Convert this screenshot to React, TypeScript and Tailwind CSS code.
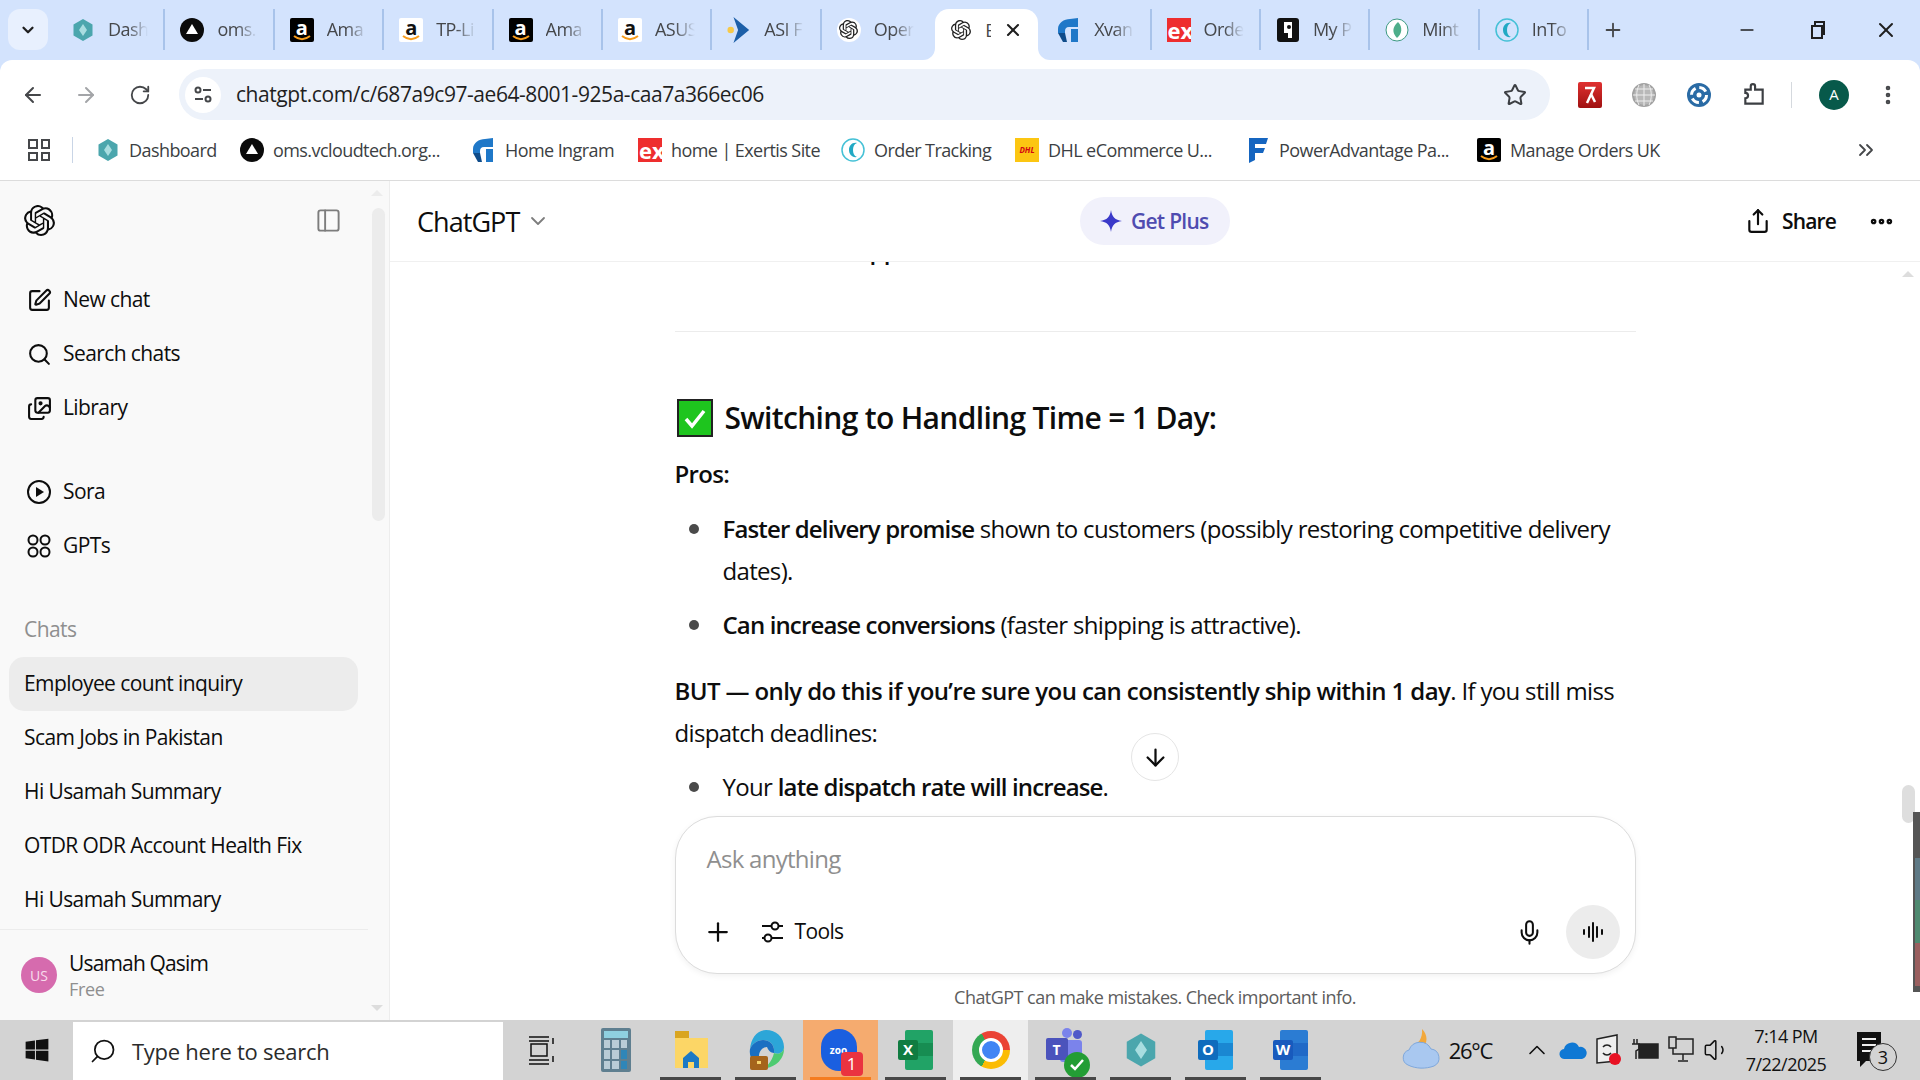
import {
  ArrowDown,
  ArrowLeft,
  ArrowRight,
  ChevronDown,
  ChevronUp,
  ChevronsRight,
  Ellipsis,
  EllipsisVertical,
  Images,
  Mic,
  Minus,
  PanelLeft,
  Plus,
  RotateCw,
  Search,
  Share,
  SquarePen,
  Star,
  Volume1,
  X,
} from "lucide-react";
import { FaWindows } from "react-icons/fa";
import { SiOpenai } from "react-icons/si";

function HexIcon({ size = 24 }: { size?: number }) {
  return (
    <svg width={size} height={size} viewBox="0 0 24 24">
      <path d="M12 1l9.5 5.5v11L12 23l-9.5-5.5v-11z" fill="#4ba6ad" />
      <path d="M12 6l4 6-4 6-4-6z" fill="#a8dde0" />
    </svg>
  );
}

function OmsIcon() {
  return (
    <svg width="24" height="24" viewBox="0 0 24 24">
      <circle cx="12" cy="12" r="12" fill="#0b0b0b" />
      <path d="M12 6l6 10H6z" fill="#fff" />
    </svg>
  );
}

function AmazonIcon({ dark = true }: { dark?: boolean }) {
  return (
    <div
      className={`relative flex h-6 w-6 items-start justify-center overflow-hidden rounded-[2px] text-[20px] leading-[20px] font-bold ${
        dark ? "bg-black text-white" : "bg-white text-[#111111]"
      }`}
    >
      a
      <svg className="absolute bottom-[1px] left-[3px]" width="18" height="6" viewBox="0 0 18 6">
        <path d="M1 1c5 4 11 4 16 0" stroke="#f79c1c" strokeWidth="2" fill="none" />
      </svg>
    </div>
  );
}

function AsiIcon() {
  return (
    <svg width="26" height="28" viewBox="0 0 26 28">
      <circle cx="4" cy="14" r="3.5" fill="#f7c948" />
      <path d="M7 0l17 14L7 28l5-14z" fill="#1c5fa8" />
    </svg>
  );
}

function IngramIcon() {
  return (
    <svg width="24" height="26" viewBox="0 0 24 26">
      <path d="M21 1v9H12c-3 0-4 2-4 4v2H1v-4C1 6 7 2 13 2z" fill="#1f78c8" />
      <path d="M14 12h7v13h-7z" fill="#1f78c8" />
      <path d="M1 16h7l2 9H6z" fill="#0f4c8a" />
    </svg>
  );
}

function ExertisIcon() {
  return (
    <div className="flex h-6 w-6 items-center justify-start overflow-hidden bg-[#ee2e2e] pl-[1px] text-[22px] leading-[22px] font-bold text-white">
      ex
    </div>
  );
}

function SwirlIcon() {
  return (
    <svg width="24" height="24" viewBox="0 0 24 24" fill="none">
      <circle cx="12" cy="12" r="11" stroke="#45c1d6" strokeWidth="1.5" />
      <path d="M16 5c-5-1-8 3-8 7s3 8 8 7c-3-1-4-4-4-7s1-6 4-7z" fill="#22a9c4" />
    </svg>
  );
}

function MintIcon() {
  return (
    <svg width="24" height="24" viewBox="0 0 24 24" fill="none">
      <circle cx="12" cy="12" r="11" fill="#fff" stroke="#3d9a83" strokeWidth="1" />
      <path d="M13 4c5 5 4 12-1 16-5-5-5-11 1-16z" fill="#4dae8a" />
    </svg>
  );
}

function PassIcon() {
  return (
    <svg width="24" height="24" viewBox="0 0 24 24">
      <rect x="1" width="22" height="24" rx="3" fill="#111" />
      <path d="M8 4h8v16h-4v-5H8z" fill="#fff" />
      <circle cx="13" cy="9" r="2" fill="#111" />
    </svg>
  );
}

function DhlIcon() {
  return (
    <div className="flex h-6 w-6 items-center justify-center bg-[#fcc612] text-[8px] font-bold text-[#d40511] italic">
      DHL
    </div>
  );
}

function PowerIcon() {
  return (
    <svg width="20" height="26" viewBox="0 0 20 26">
      <path d="M1 1h19l-2 6H7v4h10l-2 5H7v7l-6 3z" fill="#1565c0" />
    </svg>
  );
}

function OpenAiTab() {
  return (
    <div className="flex h-6 w-6 items-center justify-center rounded-full bg-white text-[#222222]">
      <SiOpenai size={19} />
    </div>
  );
}

const tabs = [
  { icon: <HexIcon />, label: "Dash" },
  { icon: <OmsIcon />, label: "oms." },
  { icon: <AmazonIcon />, label: "Ama" },
  { icon: <AmazonIcon dark={false} />, label: "TP-Li" },
  { icon: <AmazonIcon />, label: "Ama" },
  { icon: <AmazonIcon dark={false} />, label: "ASUS" },
  { icon: <AsiIcon />, label: "ASI F" },
  { icon: <OpenAiTab />, label: "Oper", last: true },
];

const tabsAfter = [
  { icon: <IngramIcon />, label: "Xvan" },
  { icon: <ExertisIcon />, label: "Orde" },
  { icon: <PassIcon />, label: "My P" },
  { icon: <MintIcon />, label: "Mint" },
  { icon: <SwirlIcon />, label: "InTo" },
];

const bookmarks = [
  { icon: <HexIcon />, label: "Dashboard", w: "w-[144px]" },
  { icon: <OmsIcon />, label: "oms.vcloudtech.org...", w: "w-[232px]" },
  { icon: <IngramIcon />, label: "Home Ingram", w: "w-[166px]" },
  { icon: <ExertisIcon />, label: "home | Exertis Site", w: "w-[203px]" },
  { icon: <SwirlIcon />, label: "Order Tracking", w: "w-[174px]" },
  { icon: <DhlIcon />, label: "DHL eCommerce U...", w: "w-[231px]" },
  { icon: <PowerIcon />, label: "PowerAdvantage Pa...", w: "w-[231px]" },
  { icon: <AmazonIcon />, label: "Manage Orders UK", w: "w-[220px]" },
];

function Tab({ icon, label, last }: { icon: React.ReactNode; label: string; last?: boolean }) {
  return (
    <div className={`flex h-[41px] w-[109.4px] items-center pl-[15px] ${last ? "" : "border-r-2 border-[#a8c3ea]"}`}>
      <div className="flex w-6 shrink-0 justify-center">{icon}</div>
      <span className="ml-[13px] w-[40px] overflow-hidden text-[18px] tracking-[-0.03em] whitespace-nowrap text-[#45474a] [mask-image:linear-gradient(to_right,black_50%,transparent)]">
        {label}
      </span>
    </div>
  );
}

function BrowserChrome() {
  return (
    <div className="bg-[#d3e3fd]">
      {/* Tab strip */}
      <div className="flex h-[60px] items-end pl-2">
        <div className="mb-[10px] flex h-[41px] w-[40px] items-center justify-center rounded-xl bg-[#e8f0fe]">
          <ChevronDown size={18} strokeWidth={3} className="text-[#1f1f1f]" />
        </div>
        <div className="ml-2 flex items-center pb-[10px]">
          {tabs.map((t, i) => (
            <Tab key={i} icon={t.icon} label={t.label} last={t.last} />
          ))}
        </div>
        <div className="relative ml-[4px] flex h-[51px] w-[103px] items-center rounded-t-[14px] bg-white pb-[9px] pl-[14px]">
          <div className="flex w-6 justify-center text-[#222222]">
            <SiOpenai size={20} />
          </div>
          <span className="ml-3 w-[6px] overflow-hidden text-[18px] text-[#45474a]">E</span>
          <X size={20} strokeWidth={2.5} className="ml-[12px] text-[#1f1f1f]" />
          {/* concave feet of the active tab */}
          <div className="absolute right-full bottom-0 h-3 w-3 bg-white">
            <div className="h-full w-full rounded-br-[12px] bg-[#d3e3fd]" />
          </div>
          <div className="absolute bottom-0 left-full h-3 w-3 bg-white">
            <div className="h-full w-full rounded-bl-[12px] bg-[#d3e3fd]" />
          </div>
        </div>
        <div className="ml-[4px] flex items-center pb-[10px]">
          {tabsAfter.map((t, i) => (
            <Tab key={i} icon={t.icon} label={t.label} />
          ))}
        </div>
        <div className="mb-[10px] flex h-[41px] items-center pl-[13px]">
          <Plus size={22} strokeWidth={2} className="text-[#45474a]" />
        </div>
        <div className="mb-[10px] ml-auto flex h-[41px] items-center text-[#1f1f1f]">
          <Minus size={20} strokeWidth={2} className="mr-[52px]" />
          <svg width="18" height="20" viewBox="0 0 18 20" fill="none" stroke="#1f1f1f" strokeWidth="2" className="mr-[47px]">
            <rect x="3" y="6" width="10" height="12" />
            <path d="M6 6V2h9v12h-2" />
          </svg>
          <X size={24} strokeWidth={2} className="mr-[22px]" />
        </div>
      </div>

      {/* Toolbar */}
      <div className="flex h-[60px] items-center rounded-t-[12px] bg-white pt-[9px]">
        <ArrowLeft size={24} strokeWidth={2} className="ml-[21px] text-[#45474a]" />
        <ArrowRight size={24} strokeWidth={2} className="ml-[29px] text-[#a3a5a8]" />
        <RotateCw size={22} strokeWidth={2} className="ml-[31px] text-[#45474a]" />
        <div className="ml-[28px] flex h-[51px] w-[1371px] items-center rounded-full bg-[#edf2fa]">
          <div className="ml-[6px] flex h-[36px] w-[36px] items-center justify-center rounded-full bg-white">
            <svg width="20" height="20" viewBox="0 0 20 20" fill="none" stroke="#45474a" strokeWidth="2">
              <circle cx="5" cy="5" r="2.5" />
              <path d="M10 5h8M2 14h8" />
              <circle cx="15" cy="14" r="2.5" />
            </svg>
          </div>
          <span className="ml-[15px] text-[21px] tracking-[-0.021em] text-[#1f1f1f]">
            chatgpt.com/c/687a9c97-ae64-8001-925a-caa7a366ec06
          </span>
          <Star size={24} strokeWidth={2} className="mr-[23px] ml-auto text-[#3c3f43]" />
        </div>
        <div className="ml-[28px] flex h-[26px] w-[24px] items-center justify-center rounded-[2px] bg-gradient-to-b from-[#e03030] to-[#a01010]">
          <svg width="16" height="20" viewBox="0 0 16 20" fill="none" stroke="#fff" strokeWidth="2.5">
            <path d="M3 3h9L5 18" />
            <path d="M9 9l4 8" />
          </svg>
        </div>
        <div className="ml-[30px] flex h-6 w-6 items-center justify-center">
          <svg width="24" height="24" viewBox="0 0 24 24" fill="none" stroke="#a2a2a2" strokeWidth="2">
            <circle cx="12" cy="12" r="11" fill="#b8b8b8" />
            <path d="M1 12h22M12 1v22M3 6h18M3 18h18M7 2c-3 6-3 14 0 20M17 2c3 6 3 14 0 20" stroke="#eeeeee" strokeWidth="1" />
          </svg>
        </div>
        <svg width="24" height="24" viewBox="0 0 24 24" className="ml-[31px]">
          <circle cx="12" cy="12" r="12" fill="#2a6ba5" />
          <circle cx="12" cy="12" r="7.5" fill="none" stroke="#fff" strokeWidth="3" strokeDasharray="8 3.8" />
          <circle cx="12" cy="12" r="2.5" fill="#fff" />
        </svg>
        <svg width="26" height="28" viewBox="0 0 24 24" fill="none" stroke="#3c3f43" strokeWidth="2" className="ml-[30px]">
          <path d="M4 7h5V4a2 2 0 0 1 4 0v3h7v13H4v-5a2.5 2.5 0 0 0 0-5z" />
        </svg>
        <div className="ml-[24px] h-[26px] w-[1px] bg-[#d5d9de]" />
        <div className="ml-[27px] flex h-[30px] w-[30px] items-center justify-center rounded-full bg-[#07594a] text-[15px] text-white">
          A
        </div>
        <EllipsisVertical size={24} strokeWidth={2.6} className="ml-[27px] text-[#45474a]" />
      </div>

      {/* Bookmarks bar */}
      <div className="flex h-[61px] items-center border-b border-[#dcdcdc] bg-white">
        <div className="ml-[28px] grid h-[22px] w-[22px] grid-cols-2 gap-[3px]">
          <div className="border-2 border-[#45474a]" />
          <div className="border-2 border-[#45474a]" />
          <div className="border-2 border-[#45474a]" />
          <div className="border-2 border-[#45474a]" />
        </div>
        <div className="ml-[22px] h-[26px] w-[1px] bg-[#c9d5e6]" />
        <div className="ml-[23px] flex">
          {bookmarks.map((b, i) => (
            <div key={i} className={`flex items-center ${b.w}`}>
              <div className="flex w-6 shrink-0 justify-center">{b.icon}</div>
              <span className="ml-[9px] text-[18px] tracking-[-0.032em] whitespace-nowrap text-[#3c3f43]">
                {b.label}
              </span>
            </div>
          ))}
        </div>
        <ChevronsRight size={24} strokeWidth={1.8} className="mr-[42px] ml-auto text-[#45474a]" />
      </div>
    </div>
  );
}

function NavItem({ icon, label }: { icon: React.ReactNode; label: string }) {
  return (
    <div className="flex h-[54px] items-center pl-[25px]">
      <div className="flex w-[28px] justify-center">{icon}</div>
      <span className="ml-[10px] text-[21px] tracking-[-0.028em]">{label}</span>
    </div>
  );
}

function SoraIcon() {
  return (
    <svg width="26" height="26" viewBox="0 0 26 26" fill="none">
      <circle cx="13" cy="13" r="11" stroke="#0d0d0d" strokeWidth="2" />
      <path d="M10 8l8 5-8 5z" fill="#0d0d0d" />
    </svg>
  );
}

function GptsIcon() {
  return (
    <svg width="26" height="26" viewBox="0 0 26 26" fill="none" stroke="#0d0d0d" strokeWidth="2">
      <circle cx="7" cy="7" r="4.5" />
      <circle cx="19" cy="7" r="4.5" />
      <circle cx="7" cy="19" r="4.5" />
      <circle cx="19" cy="19" r="4.5" />
    </svg>
  );
}

function Sidebar() {
  const chats = ["Scam Jobs in Pakistan", "Hi Usamah Summary", "OTDR ODR Account Health Fix", "Hi Usamah Summary"];
  return (
    <aside className="relative flex h-full w-[390px] shrink-0 flex-col border-r border-[#ededed] bg-[#f9f9f9] text-[#0d0d0d]">
      <div className="flex h-[92px] shrink-0 items-center justify-between pr-[47px] pb-[14px] pl-[24px]">
        <SiOpenai size={31} />
        <PanelLeft size={27} strokeWidth={1.7} className="text-[#7d7d7d]" />
      </div>
      <NavItem icon={<SquarePen size={25} strokeWidth={2} />} label="New chat" />
      <NavItem icon={<Search size={25} strokeWidth={2} />} label="Search chats" />
      <NavItem icon={<Images size={25} strokeWidth={2} />} label="Library" />
      <div className="h-[30px] shrink-0" />
      <NavItem icon={<SoraIcon />} label="Sora" />
      <NavItem icon={<GptsIcon />} label="GPTs" />
      <div className="h-[30px] shrink-0" />
      <div className="flex h-[54px] items-center pl-[24px] text-[21px] tracking-[-0.028em] text-[#8f8f8f]">Chats</div>
      <div className="mr-[31px] ml-[9px] flex h-[54px] items-center rounded-[15px] bg-[#ececec] pl-[15px] text-[21px] tracking-[-0.028em]">
        Employee count inquiry
      </div>
      {chats.map((c, i) => (
        <div key={i} className="flex h-[54px] items-center pl-[24px] text-[21px] tracking-[-0.028em] whitespace-nowrap">
          {c}
        </div>
      ))}
      <div className="mt-[2px] mr-[21px] flex flex-1 items-center border-t border-[#ececec] pl-[21px]">
        <div className="flex h-9 w-9 items-center justify-center rounded-full bg-[#d66bae] text-[14px] text-[#f8dcec]">
          US
        </div>
        <div className="ml-[12px] flex flex-col">
          <span className="text-[21px] leading-[27px] tracking-[-0.04em]">Usamah Qasim</span>
          <span className="text-[18px] leading-[24px] tracking-[-0.02em] text-[#8f8f8f]">Free</span>
        </div>
      </div>
      {/* scrollbar */}
      <div className="absolute top-[27px] right-[4px] h-[313px] w-[13px] rounded-full bg-[#ececec]" />
      <div className="absolute top-[9px] right-[6px] h-0 w-0 border-x-[6px] border-b-[6px] border-x-transparent border-b-[#ececec]" />
      <div className="absolute right-[6px] bottom-[9px] h-0 w-0 border-x-[6px] border-t-[6px] border-x-transparent border-t-[#dddddd]" />
    </aside>
  );
}

function Bullet({ children, className }: { children: React.ReactNode; className?: string }) {
  return (
    <li className={`flex ${className ?? ""}`}>
      <span className="mt-[16px] mr-[24px] h-[10px] w-[10px] shrink-0 rounded-full bg-[#4a4a4a]" />
      <span>{children}</span>
    </li>
  );
}

function Message() {
  return (
    <div className="mx-auto w-[961px] text-[24px] leading-[42px] tracking-[-0.028em] text-[#0d0d0d]">
      <div className="-mt-[33px] ml-[195px] font-semibold">pp</div>
      <div className="mt-[60px] h-[1px] bg-[#ececec]" />
      <h3 className="mt-[63px] flex h-[45px] items-center text-[30px] font-semibold">
        <svg width="36" height="38" viewBox="0 0 36 38" className="mr-[12px] ml-[2px]">
          <rect x="1" y="1" width="34" height="36" fill="#1ec51e" stroke="#222" strokeWidth="2" />
          <path d="M9 20l6 7 12-15" stroke="#fff" strokeWidth="3.5" fill="none" />
        </svg>
        Switching to Handling Time = 1 Day:
      </h3>
      <p className="mt-[13px] font-semibold">Pros:</p>
      <ul className="mt-[13px] pl-[14px]">
        <Bullet>
          <span className="font-semibold tracking-[-0.036em]">Faster delivery promise</span> shown to customers
          (possibly restoring competitive delivery dates).
        </Bullet>
        <Bullet className="mt-[12px]">
          <span className="font-semibold tracking-[-0.036em]">Can increase conversions</span> (faster shipping is
          attractive).
        </Bullet>
      </ul>
      <p className="mt-[24px]">
        <span className="font-semibold tracking-[-0.025em]">
          BUT — only do this if you’re sure you can consistently ship within 1 day
        </span>
        . If you still miss dispatch deadlines:
      </p>
      <ul className="mt-[12px] pl-[14px]">
        <Bullet>
          Your <span className="font-semibold tracking-[-0.036em]">late dispatch rate will increase</span>.
        </Bullet>
      </ul>
    </div>
  );
}

function ToolsIcon() {
  return (
    <svg width="26" height="26" viewBox="0 0 26 26" fill="none" stroke="#0d0d0d" strokeWidth="2">
      <circle cx="16" cy="7" r="3.5" />
      <circle cx="9" cy="19" r="3.5" />
      <path d="M3 7h9.5M19.5 7H24M3 19h2.5M12.5 19H24" />
    </svg>
  );
}

function VoiceIcon() {
  return (
    <svg width="24" height="24" viewBox="0 0 24 24" fill="none" stroke="#0d0d0d" strokeWidth="2" strokeLinecap="round">
      <path d="M3 10v4M8 7v10M12 3v18M16 7v10M21 10v4" />
    </svg>
  );
}

function Composer() {
  return (
    <div className="mx-auto flex h-[158px] w-[961px] flex-col rounded-[42px] border border-[#dcdcdc] bg-white pr-[15px] pl-[31px] shadow-[0_2px_6px_rgba(0,0,0,0.06)]">
      <div className="mt-[21px] text-[24px] leading-[42px] tracking-[-0.03em] text-[#8f8f8f]">Ask anything</div>
      <div className="mt-[25px] flex items-center text-[#0d0d0d]">
        <Plus size={30} strokeWidth={1.8} className="-ml-[4px]" />
        <span className="ml-[26px]">
          <ToolsIcon />
        </span>
        <span className="ml-[10px] text-[21px] tracking-[-0.03em]">Tools</span>
        <Mic size={27} strokeWidth={1.8} className="mr-[23px] ml-auto" />
        <div className="flex h-[54px] w-[54px] items-center justify-center rounded-full bg-[#ececec]">
          <VoiceIcon />
        </div>
      </div>
    </div>
  );
}

function ChatPane() {
  return (
    <main className="relative flex h-full min-w-0 flex-1 flex-col bg-white">
      <header className="flex h-[81px] shrink-0 items-center border-b border-[#f0f0f0] pr-[25px] pl-[27px] text-[#0d0d0d]">
        <span className="w-[109px] pt-[2px] text-[27px] tracking-[-0.035em]">ChatGPT</span>
        <ChevronDown size={24} strokeWidth={1.8} className="text-[#7d7d7d]" />
        <div className="ml-[530px] flex h-[48px] w-[150px] items-center rounded-full bg-[#f1f1fb] pl-[19px] text-[21px] font-semibold tracking-[-0.035em] text-[#4f4cb0]">
          <svg width="24" height="24" viewBox="0 0 24 24" fill="#3b39c9">
            <path d="M12 1c1 7 4 10 11 11-7 1-10 4-11 11-1-7-4-10-11-11 7-1 10-4 11-11z" />
          </svg>
          <span className="ml-[8px] pt-[1px]">Get Plus</span>
        </div>
        <Share size={26} strokeWidth={2} className="ml-auto" />
        <span className="ml-[11px] pt-[1px] text-[21px] font-semibold tracking-[-0.04em]">Share</span>
        <Ellipsis size={27} strokeWidth={3} className="ml-[32px]" />
      </header>
      <div className="relative min-h-0 flex-1 overflow-hidden">
        <Message />
      </div>
      <div className="h-[204px] shrink-0">
        <Composer />
        <p className="mt-[11px] text-center text-[18px] leading-[24px] tracking-[-0.03em] text-[#5d5d5d]">
          ChatGPT can make mistakes. Check important info.
        </p>
      </div>

      {/* scroll to bottom */}
      <div className="absolute top-[552px] left-[741px] flex h-12 w-12 items-center justify-center rounded-full border border-[#e5e5e5] bg-white">
        <ArrowDown size={27} strokeWidth={2} className="text-[#0d0d0d]" />
      </div>
      {/* scrollbar and minimap strip */}
      <div className="absolute top-[90px] right-[6px] h-0 w-0 border-x-[6px] border-b-[6px] border-x-transparent border-b-[#dddddd]" />
      <div className="absolute top-[604px] right-[5px] h-[38px] w-[13px] rounded-full bg-[#dedede]" />
      <div className="absolute top-[631px] right-0 flex h-[180px] w-[7px] flex-col bg-[#555555] pt-[46px] pl-[2px]">
        <div className="h-[42px] bg-[#5f7a86]" />
        <div className="h-[43px] bg-[#4f8a70]" />
        <div className="h-[43px] bg-[#9a5f5f]" />
      </div>
    </main>
  );
}

function CalcIcon() {
  return (
    <div className="flex h-[44px] w-[30px] flex-col gap-[2px] rounded-[2px] bg-[#5f7f90] p-[3px]">
      <div className="h-[7px] bg-[#8fd0e0]" />
      <div className="grid flex-1 grid-cols-3 gap-[2px]">
        {[0, 1, 2, 3, 4, 5, 6, 7, 8].map((n) => (
          <div key={n} className={n === 5 || n === 8 ? "bg-[#2f86b8]" : "bg-[#b9ccd6]"} />
        ))}
      </div>
    </div>
  );
}

function FolderIcon() {
  return (
    <svg width="36" height="44" viewBox="0 0 36 44">
      <path d="M2 3h14v8H2z" fill="#d9a520" />
      <path d="M2 10h33v30H2z" fill="#fcd666" />
      <path d="M10 30l8-7 8 7v10h-5v-6h-6v6h-5z" fill="#1c79c4" />
    </svg>
  );
}

function EdgeIcon() {
  return (
    <svg width="40" height="44" viewBox="0 0 40 44">
      <path d="M20 2c10 0 18 7 18 17 0 6-6 8-10 6 1-8-4-13-11-13-6 0-11 4-13 9C5 10 11 2 20 2z" fill="#2ca6d8" />
      <path d="M4 21c2-5 7-9 13-9 7 0 12 5 11 13-3 0-6-3-7-6-6 0-11 8-6 16 2 3 6 5 10 5C14 41 2 34 4 21z" fill="#1a6fc2" />
      <path d="M28 25c4 2 10 0 10-6 1 11-8 21-20 21 1 0 8-6 10-15z" fill="#4ecb71" />
      <rect x="4" y="28" width="18" height="14" rx="2" fill="#a5641c" />
      <rect x="11" y="33" width="4" height="3" fill="#f5d26a" />
    </svg>
  );
}

function ZoomIcon() {
  return (
    <div className="relative h-[42px] w-[40px]">
      <div className="flex h-[42px] w-[36px] items-center justify-center rounded-full bg-[#1a5fe0] text-[10px] font-bold text-white">
        zoo
      </div>
      <div className="absolute -right-[2px] -bottom-[5px] flex h-[24px] w-[22px] items-center justify-center rounded-[4px] bg-[#ea3340] text-[17px] text-white">
        1
      </div>
    </div>
  );
}

function OfficeIcon({ letter, back, front, w = 28 }: { letter: string; back: string; front: string; w?: number }) {
  return (
    <svg width="38" height="42" viewBox="0 0 38 42">
      <rect x="8" y="1" width={w} height="40" rx="2" fill={back} />
      <rect x="8" y="14" width={w} height="13" fill={front} opacity="0.55" />
      <rect x="1" y="11" width="20" height="20" rx="2" fill={front} />
      <text x="11" y="26" textAnchor="middle" fontSize="15" fontWeight="700" fill="#fff" fontFamily="Open Sans, sans-serif">
        {letter}
      </text>
    </svg>
  );
}

function ChromeIcon() {
  return (
    <div className="flex h-[38px] w-[38px] items-center justify-center rounded-full bg-[conic-gradient(#ea4335_0deg_90deg,#fbbc04_90deg_210deg,#34a853_210deg_330deg,#ea4335_330deg)]">
      <div className="box-content h-[18px] w-[18px] rounded-full border-[3px] border-white bg-[#4285f4]" />
    </div>
  );
}

function TeamsIcon() {
  return (
    <div className="relative ml-[4px] h-[44px] w-[44px]">
      <div className="absolute top-0 left-[16px] h-[10px] w-[10px] rounded-full bg-[#7b83eb]" />
      <div className="absolute top-[2px] right-[8px] h-[9px] w-[9px] rounded-full bg-[#5059c9]" />
      <div className="absolute top-[12px] left-[14px] h-[22px] w-[22px] rounded-[3px] bg-[#7b83eb]" />
      <div className="absolute top-[10px] left-0 flex h-[22px] w-[22px] items-center justify-center rounded-[2px] bg-[#4b53bc] text-[14px] font-bold text-white">
        T
      </div>
      <div className="absolute right-0 bottom-[-6px] flex h-[26px] w-[26px] items-center justify-center rounded-full bg-[#239d35]">
        <svg width="14" height="12" viewBox="0 0 14 12" fill="none" stroke="#fff" strokeWidth="2.5">
          <path d="M1 6l4 4 8-9" />
        </svg>
      </div>
    </div>
  );
}

function TaskItem({ children, bar, bg }: { children: React.ReactNode; bar?: string; bg?: string }) {
  return (
    <div className={`relative flex h-full w-[75px] items-center justify-center ${bg ?? ""}`}>
      {children}
      {bar && <div className={`absolute right-[7px] bottom-0 left-[7px] h-[3px] ${bar}`} />}
    </div>
  );
}

function Taskbar() {
  return (
    <div className="flex h-[60px] shrink-0 items-stretch bg-[#d3d3d3] text-[#111111]">
      <div className="flex w-[73px] items-center justify-center">
        <FaWindows size={26} />
      </div>
      <div className="mt-[2px] flex w-[430px] items-center bg-white pl-[16px]">
        <Search size={28} strokeWidth={1.5} className="-scale-x-100" />
        <span className="ml-[15px] text-[22px] tracking-[-0.012em] text-[#2b2b2b]">Type here to search</span>
      </div>
      <TaskItem>
        <svg width="26" height="32" viewBox="0 0 26 32" fill="none" stroke="#111" strokeWidth="1.5">
          <rect x="3" y="10" width="16" height="12" />
          <path d="M1 3h20M1 7h20M1 26h20M1 30h20M25 4v6M25 22v6" />
        </svg>
      </TaskItem>
      <TaskItem>
        <CalcIcon />
      </TaskItem>
      <TaskItem bar="bg-[#474747]">
        <FolderIcon />
      </TaskItem>
      <TaskItem bar="bg-[#474747]">
        <EdgeIcon />
      </TaskItem>
      <TaskItem bar="bg-[#f57c1f]" bg="bg-[#f5ab6f]">
        <ZoomIcon />
      </TaskItem>
      <TaskItem bar="bg-[#474747]">
        <OfficeIcon letter="X" back="#21a366" front="#107c41" />
      </TaskItem>
      <TaskItem bar="bg-[#474747]" bg="bg-[#eeeeee]">
        <ChromeIcon />
      </TaskItem>
      <TaskItem bar="bg-[#474747]">
        <TeamsIcon />
      </TaskItem>
      <TaskItem bar="bg-[#474747]">
        <HexIcon size={36} />
      </TaskItem>
      <TaskItem bar="bg-[#474747]">
        <OfficeIcon letter="O" back="#28a8ea" front="#0f6cbd" />
      </TaskItem>
      <TaskItem bar="bg-[#474747]">
        <OfficeIcon letter="W" back="#2b7cd3" front="#185abd" />
      </TaskItem>

      {/* system tray */}
      <div className="ml-auto flex items-center pr-[18px]">
        <svg width="42" height="46" viewBox="0 0 42 46" className="mr-[7px]">
          <path d="M22 2c6 6 6 14 0 20-4 1-9-1-10-4 6 0 11-7 10-16z" fill="#f2a83b" />
          <path d="M8 38a8 8 0 0 1 1-15 12 12 0 0 1 22-1 9 9 0 0 1 3 17c-8 3-18 3-26-1z" fill="#a9c8f0" stroke="#7fa8dc" strokeWidth="1" />
        </svg>
        <span className="mr-[27px] text-[22px] tracking-[-0.06em]">26°C</span>
        <div className="flex w-[36px] justify-center">
          <ChevronUp size={28} strokeWidth={1.4} />
        </div>
        <div className="flex w-[36px] justify-center">
          <svg width="28" height="20" viewBox="0 0 28 20">
            <path d="M6 19a5 5 0 0 1-1-10 8 8 0 0 1 15-2 6 6 0 0 1 3 12z" fill="#0f78d4" />
          </svg>
        </div>
        <div className="flex w-[36px] justify-center">
          <svg width="28" height="34" viewBox="0 0 28 34" fill="none">
            <path d="M2 6l20-4v26L2 30z" fill="#eee" stroke="#222" strokeWidth="1.5" />
            <path d="M8 14a5 5 0 0 1 8 0M16 20a5 5 0 0 1-8 0" stroke="#222" strokeWidth="1.5" />
            <circle cx="20" cy="26" r="6" fill="#e81123" />
          </svg>
        </div>
        <div className="flex w-[36px] justify-center">
          <svg width="28" height="24" viewBox="0 0 28 24" fill="none" stroke="#222" strokeWidth="1.5">
            <rect x="8" y="6" width="19" height="14" fill="#222" />
            <path d="M3 1v5M6 1v5M1 6h7v5l-3 2v8" />
          </svg>
        </div>
        <div className="flex w-[35px] justify-center">
          <svg width="28" height="28" viewBox="0 0 28 28" fill="none" stroke="#222" strokeWidth="1.5">
            <rect x="6" y="3" width="20" height="15" />
            <rect x="2" y="1" width="7" height="11" fill="#d3d3d3" />
            <path d="M16 18v6M11 25h10" />
          </svg>
        </div>
        <div className="flex w-[38px] justify-center">
          <Volume1 size={28} strokeWidth={1.3} />
        </div>
        <div className="flex w-[100px] flex-col items-center text-[18px] leading-[28px] tracking-[-0.03em]">
          <span>7:14 PM</span>
          <span>7/22/2025</span>
        </div>
        <div className="relative flex w-[66px] justify-center">
          <svg width="26" height="38" viewBox="0 0 26 38">
            <path d="M1 1h24v29H10l-6 6v-6H1z" fill="#111" />
            <path d="M6 8h14M6 14h14M6 20h14" stroke="#eee" strokeWidth="2" />
          </svg>
          <div className="absolute top-[12px] left-[33px] flex h-[28px] w-[28px] items-center justify-center rounded-full border border-[#333333] bg-[#d3d3d3] text-[18px]">
            3
          </div>
        </div>
      </div>
    </div>
  );
}

export default function App() {
  return (
    <div className="flex h-[1080px] w-[1920px] flex-col overflow-hidden bg-white font-['Open_Sans',sans-serif]">
      <BrowserChrome />
      <div className="flex min-h-0 flex-1">
        <Sidebar />
        <ChatPane />
      </div>
      <Taskbar />
    </div>
  );
}
